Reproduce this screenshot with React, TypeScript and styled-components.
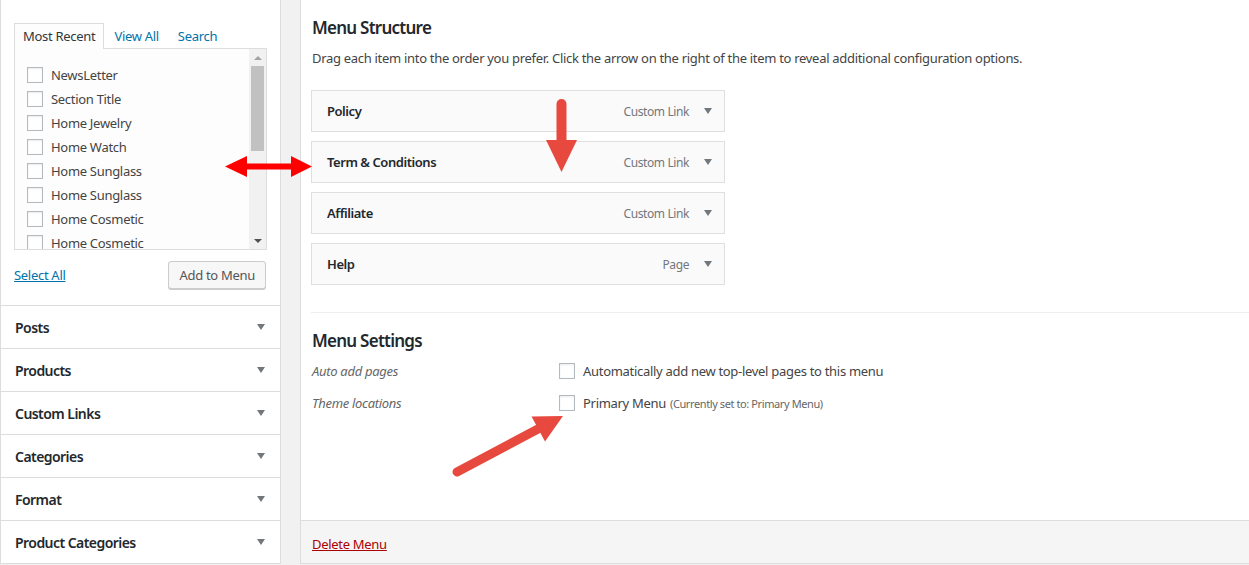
import React from "react";
import styled, { createGlobalStyle } from "styled-components";

const Global = createGlobalStyle`
  html, body { margin: 0; padding: 0; background: #f1f1f1; }
  body {
    font-family: "Noto Sans", "Open Sans", sans-serif;
    font-size: 13px;
    letter-spacing: -0.3px;
    color: #444;
    width: 1249px;
    height: 565px;
    overflow: hidden;
  }
  * { box-sizing: border-box; }
`;

const Page = styled.div`
  position: relative;
  display: flex;
  gap: 19px;
  height: 565px;
  width: 1249px;
`;

const Sidebar = styled.aside`
  width: 281px;
  flex: none;
  background: #fff;
  border-left: 1px solid #ddd;
  border-right: 1px solid #ddd;
  border-bottom: 1px solid #ddd;
  height: 564px;
  display: flex;
  flex-direction: column;
`;

const PagesBox = styled.div`
  height: 306px;
  padding: 23px 13px 0 13px;
  display: flex;
  flex-direction: column;
`;

const Tabs = styled.div`
  display: flex;
  gap: 1px;
  position: relative;
  z-index: 1;
  margin-bottom: -1px;
`;

const Tab = styled.div<{ $active?: boolean }>`
  padding: 3px 8px 3px 8px;
  line-height: 19px;
  font-size: 13px;
  border: 1px solid ${(p) => (p.$active ? "#ddd" : "transparent")};
  border-bottom: none;
  background: ${(p) => (p.$active ? "#fdfdfd" : "transparent")};
  color: ${(p) => (p.$active ? "#32373c" : "#0073aa")};
`;

const TabPanel = styled.div`
  height: 202px;
  border: 1px solid #ddd;
  background: #fdfdfd;
  display: flex;
  overflow: hidden;
`;

const ItemList = styled.div`
  flex: 1;
  padding: 14px 0 0 12px;
  display: flex;
  flex-direction: column;
`;

const ListRow = styled.label`
  display: flex;
  align-items: center;
  gap: 8px;
  height: 24px;
  flex: none;
  color: #444;
  font-size: 13px;
  white-space: nowrap;
`;

const Check = styled.span`
  width: 16px;
  height: 16px;
  flex: none;
  border: 1px solid #b4b9be;
  background: #fff;
  box-shadow: inset 0 1px 2px rgba(0, 0, 0, 0.08);
`;

const ScrollTrack = styled.div`
  width: 17px;
  flex: none;
  background: #f1f1f1;
  display: flex;
  flex-direction: column;
  align-items: center;
`;

const ScrollArrow = styled.div<{ $down?: boolean }>`
  height: 17px;
  width: 17px;
  flex: none;
  display: flex;
  align-items: center;
  justify-content: center;
  &::before {
    content: "";
    border-left: 4px solid transparent;
    border-right: 4px solid transparent;
    ${(p) =>
      p.$down
        ? "border-top: 4px solid #505050;"
        : "border-bottom: 4px solid #a3a3a3;"}
  }
`;

const ScrollThumb = styled.div`
  width: 13px;
  height: 85px;
  background: #c1c1c1;
`;

const ScrollSpacer = styled.div`
  flex: 1;
`;

const PanelActions = styled.div`
  display: flex;
  justify-content: space-between;
  align-items: center;
  margin-top: 11px;
  padding-right: 1px;
`;

const TextLink = styled.a<{ $danger?: boolean }>`
  color: ${(p) => (p.$danger ? "#a00" : "#0073aa")};
  text-decoration: underline;
  font-size: 13px;
  cursor: pointer;
`;

const Button = styled.button`
  height: 28px;
  padding: 0 10px;
  font-family: inherit;
  font-size: 13px;
  letter-spacing: -0.3px;
  color: #555;
  background: #f7f7f7;
  border: 1px solid #ccc;
  border-radius: 3px;
  box-shadow: 0 1px 0 #ccc;
`;

const AccordionRow = styled.div`
  height: 43px;
  border-top: 1px solid #ddd;
  display: flex;
  align-items: center;
  justify-content: space-between;
  padding: 0 15px 0 14px;
  font-size: 14px;
  font-weight: 600;
  letter-spacing: -0.55px;
  color: #23282d;
`;

const Caret = styled.span`
  width: 0;
  height: 0;
  border-left: 4.5px solid transparent;
  border-right: 4.5px solid transparent;
  border-top: 6px solid #72777c;
`;

const Main = styled.main`
  flex: 1;
  background: #fff;
  border-left: 1px solid #ddd;
  border-bottom: 1px solid #ddd;
  height: 564px;
  display: flex;
  flex-direction: column;
`;

const MainBody = styled.div`
  flex: 1;
  padding-left: 10px;
  display: flex;
  flex-direction: column;
`;

const SectionTitle = styled.h3<{ $top: number }>`
  margin: ${(p) => p.$top}px 0 0 1px;
  font-size: 17px;
  line-height: 22px;
  font-weight: 600;
  letter-spacing: -0.75px;
  color: #23282d;
`;

const Description = styled.p`
  margin: 10px 0 0 1px;
  line-height: 19px;
  font-size: 13px;
  color: #444;
`;

const MenuItems = styled.div`
  margin-top: 22px;
  display: flex;
  flex-direction: column;
  gap: 9px;
  width: 414px;
`;

const MenuItem = styled.div`
  height: 42px;
  border: 1px solid #dfdfdf;
  background: #fafafa;
  display: flex;
  align-items: center;
  padding: 0 12px 0 15px;
  gap: 15px;
`;

const ItemTitle = styled.span`
  flex: 1;
  font-size: 13px;
  font-weight: 600;
  letter-spacing: -0.45px;
  color: #23282d;
`;

const ItemType = styled.span`
  font-size: 12px;
  letter-spacing: -0.4px;
  color: #72777c;
`;

const Settings = styled.section`
  margin-top: 27px;
  border-top: 1px solid #eee;
  display: flex;
  flex-direction: column;
`;

const SettingRows = styled.div`
  margin-top: 3px;
  display: flex;
  flex-direction: column;
`;

const SettingRow = styled.div`
  display: grid;
  grid-template-columns: 248px auto;
  align-items: center;
  height: 32px;
`;

const SettingLabel = styled.span`
  font-style: italic;
  color: #666;
  font-size: 13px;
  padding-left: 1px;
`;

const SettingOption = styled.label`
  display: flex;
  align-items: center;
  gap: 8px;
  color: #444;
  font-size: 13px;
`;

const Muted = styled.span`
  font-size: 11px;
  letter-spacing: -0.4px;
  color: #666;
  margin-left: 4px;
`;

const Footer = styled.footer`
  height: 43px;
  border-top: 1px solid #ddd;
  background: #f5f5f5;
  display: flex;
  align-items: center;
  padding: 3px 0 0 11px;
`;

const Annotations = styled.svg`
  position: absolute;
  left: 0;
  top: 0;
  pointer-events: none;
`;

const recent = [
  "NewsLetter",
  "Section Title",
  "Home Jewelry",
  "Home Watch",
  "Home Sunglass",
  "Home Sunglass",
  "Home Cosmetic",
  "Home Cosmetic",
];

const sections = ["Posts", "Products", "Custom Links", "Categories", "Format", "Product Categories"];

const items = [
  { title: "Policy", type: "Custom Link" },
  { title: "Term & Conditions", type: "Custom Link" },
  { title: "Affiliate", type: "Custom Link" },
  { title: "Help", type: "Page" },
];

export default function App() {
  return (
    <>
      <Global />
      <Page>
        <Sidebar>
          <PagesBox>
            <Tabs>
              <Tab $active>Most Recent</Tab>
              <Tab>View All</Tab>
              <Tab>Search</Tab>
            </Tabs>
            <TabPanel>
              <ItemList>
                {recent.map((r, i) => (
                  <ListRow key={i}>
                    <Check />
                    {r}
                  </ListRow>
                ))}
              </ItemList>
              <ScrollTrack>
                <ScrollArrow />
                <ScrollThumb />
                <ScrollSpacer />
                <ScrollArrow $down />
              </ScrollTrack>
            </TabPanel>
            <PanelActions>
              <TextLink>Select All</TextLink>
              <Button>Add to Menu</Button>
            </PanelActions>
          </PagesBox>
          {sections.map((s) => (
            <AccordionRow key={s}>
              {s}
              <Caret />
            </AccordionRow>
          ))}
        </Sidebar>
        <Main>
          <MainBody>
            <SectionTitle $top={17}>Menu Structure</SectionTitle>
            <Description>
              Drag each item into the order you prefer. Click the arrow on the right of the item to reveal additional
              configuration options.
            </Description>
            <MenuItems>
              {items.map((it) => (
                <MenuItem key={it.title}>
                  <ItemTitle>{it.title}</ItemTitle>
                  <ItemType>{it.type}</ItemType>
                  <Caret />
                </MenuItem>
              ))}
            </MenuItems>
            <Settings>
              <SectionTitle $top={17}>Menu Settings</SectionTitle>
              <SettingRows>
                <SettingRow>
                  <SettingLabel>Auto add pages</SettingLabel>
                  <SettingOption>
                    <Check />
                    Automatically add new top-level pages to this menu
                  </SettingOption>
                </SettingRow>
                <SettingRow>
                  <SettingLabel>Theme locations</SettingLabel>
                  <SettingOption>
                    <Check />
                    <span>
                      Primary Menu<Muted>(Currently set to: Primary Menu)</Muted>
                    </span>
                  </SettingOption>
                </SettingRow>
              </SettingRows>
            </Settings>
          </MainBody>
          <Footer>
            <TextLink $danger>Delete Menu</TextLink>
          </Footer>
        </Main>
        <Annotations width="1249" height="565" viewBox="0 0 1249 565">
          <polygon
            fill="#ff0000"
            points="225,166.5 247,156 247,163.5 291,163.5 291,156 312,166.5 291,177 291,169.5 247,169.5 247,177"
          />
          <g fill="#e8493f" stroke="#e8493f">
            <line x1="561.5" y1="104" x2="561.5" y2="145" strokeWidth="10" strokeLinecap="round" />
            <polygon stroke="none" points="546,140 577,140 561.5,172" />
            <line x1="457" y1="472" x2="538" y2="429" strokeWidth="9" strokeLinecap="round" />
            <polygon stroke="none" points="531.5,416.5 563,416 545,441.5" />
          </g>
        </Annotations>
      </Page>
    </>
  );
}
